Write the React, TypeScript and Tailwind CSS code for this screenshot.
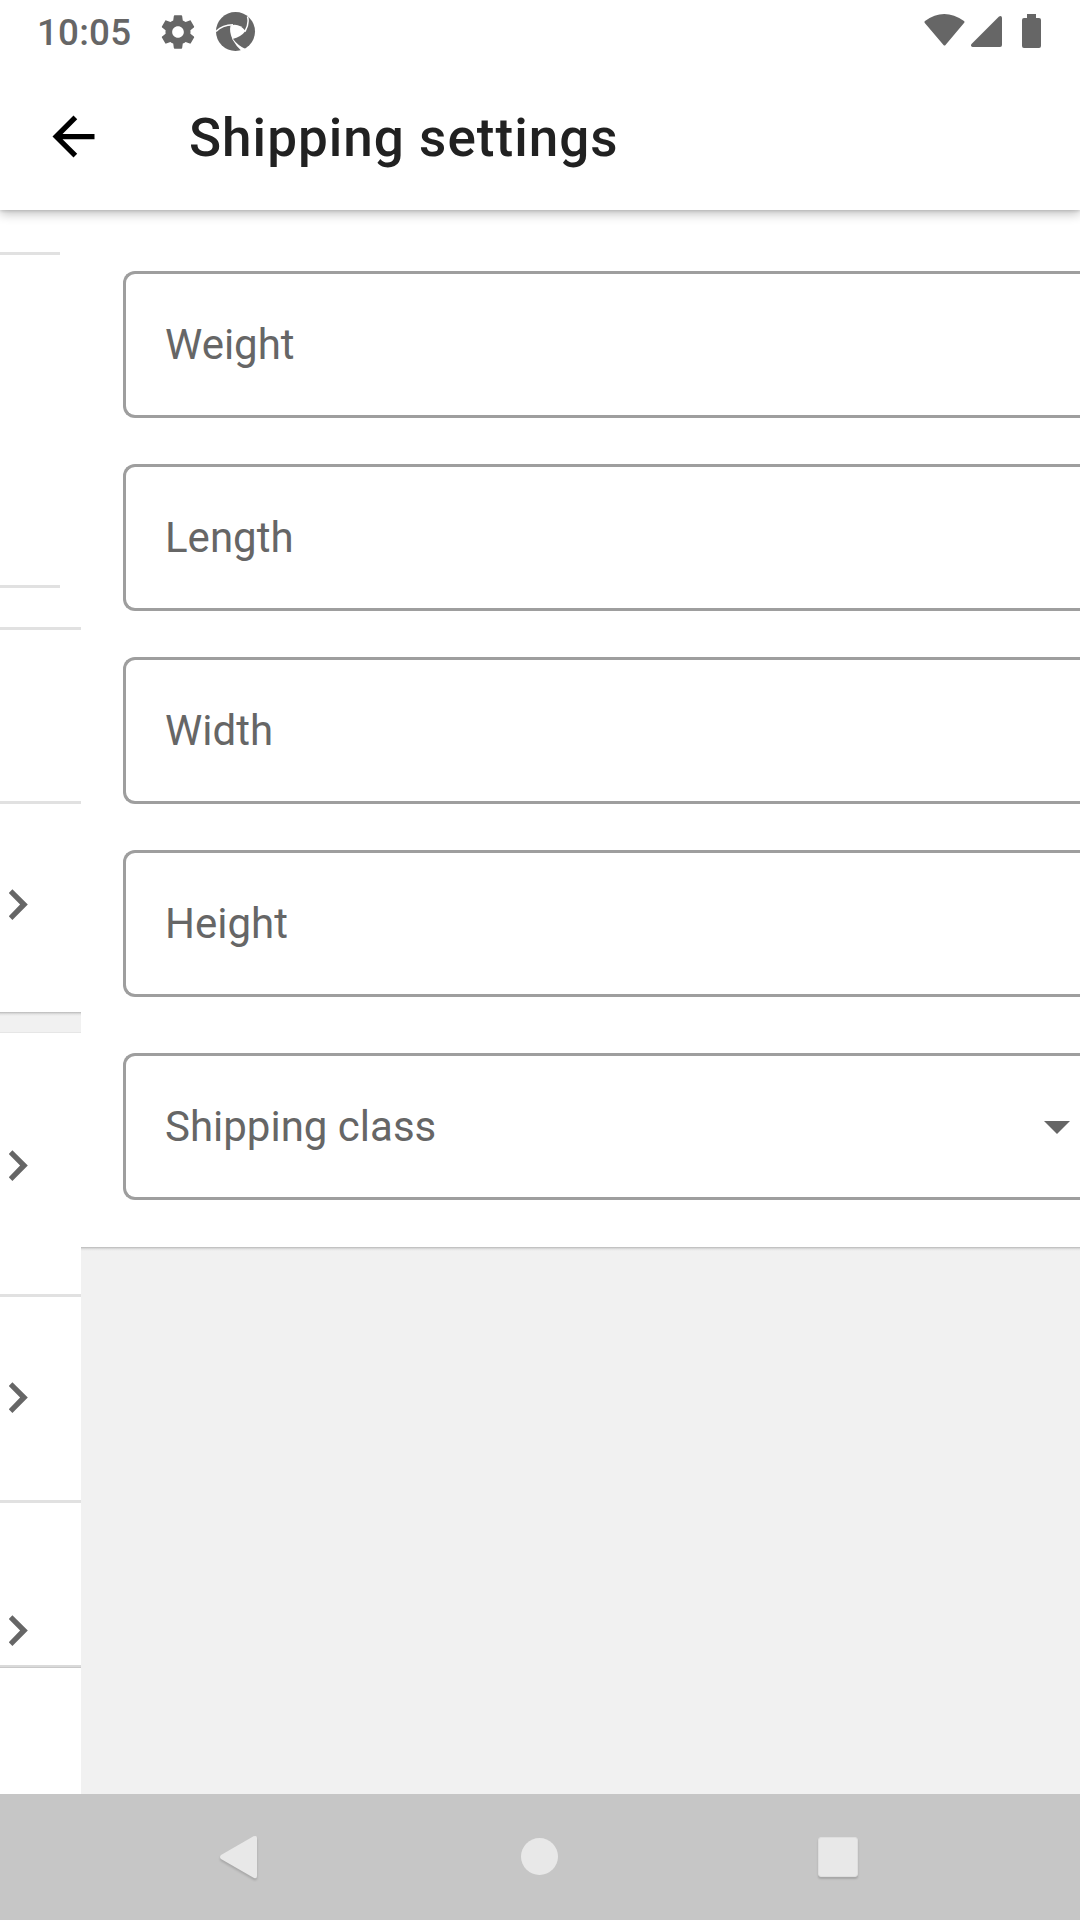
import React from "react";

const FIELDS = ["Weight", "Length", "Width", "Height"];

function Chevron() {
  return (
    <svg viewBox="0 0 19 32" className="ml-[9px] h-8 w-[19px] shrink-0 text-[#666]">
      <path d="M-.3 4L3.400 .3L18.800 15.600L3.400 31L-.3 27.300L11.100 15.600Z" fill="currentColor" />
    </svg>
  );
}

function StatusBar() {
  return (
    <div className="flex h-[63px] shrink-0 items-start text-[#666]">
      <span className="ml-[37px] mt-[11px] w-[95px] whitespace-nowrap text-[36.75px] font-medium leading-[44px] tracking-[0.2px]">10:05</span>
      <svg viewBox="0 0 24 24" className="ml-[26px] mt-[12px] h-[40px] w-[40px] shrink-0" fill="currentColor">
        <path d="M19.430 12.980c.04-.32.07-.64.07-.98s-.03-.66-.07-.98l2.110-1.650c.19-.15.24-.42.12-.64l-2-3.460c-.12-.22-.39-.3-.61-.22l-2.490 1c-.52-.4-1.080-.73-1.690-.98l-.38-2.650C14.460 2.180 14.250 2 14 2h-4c-.25 0-.46.18-.49.42l-.38 2.650c-.61.25-1.170.59-1.690.98l-2.490-1c-.23-.09-.49 0-.61.22l-2 3.460c-.13.22-.07.49.12.64l2.110 1.650c-.04.32-.07.65-.07.98s.03.66.07.98l-2.110 1.650c-.19.15-.24.42-.12.64l2 3.460c.12.22.39.3.61.22l2.490-1c.52.4 1.080.73 1.690.98l.38 2.650c.03.24.24.42.49.42h4c.25 0 .46-.18.49-.42l.38-2.650c.61-.25 1.170-.59 1.690-.98l2.490 1c.23.09.49 0 .61-.22l2-3.460c.12-.22.07-.49-.12-.64l-2.110-1.650zM12 15.500c-1.930 0-3.500-1.570-3.500-3.500s1.570-3.500 3.500-3.500 3.500 1.570 3.500 3.500-1.570 3.500-3.500 3.500z" />
      </svg>
      <svg viewBox="0 0 40 40" className="ml-[18px] mt-[12px] h-10 w-10 shrink-0">
        <circle cx="19.500" cy="19.500" r="19.500" fill="currentColor" />
        <path d="M14.500 13.500Q23 10.500 29.500 19Q25 25 16.500 27Q13 20 14.500 13.500Z" fill="#fff" />
        <path d="M0 19.500Q6 13 17 12.800M31.500 4.500Q33.500 12 29 19.500" fill="none" stroke="#fff" strokeWidth="1.500" />
        <path d="M15.800 26.500Q20 34 26 39.500L30.500 37.500Q22 34 16.300 26Z" fill="#fff" />
      </svg>
      <svg viewBox="0 0 118 35" className="ml-auto mr-[38px] mt-[14px] h-[35px] w-[118px] shrink-0" fill="currentColor">
        <path d="M1 7Q20-7 40 7Q41 8 40 9L21.500 31Q20.500 32 19.500 31L.8 9Q0 8 1 7Z" />
        <path d="M47.500 30L75 2.500Q77.500 1 78 3.500V31Q78 33 76 33H48.500Q46 32 47.500 30Z" />
        <path d="M103 0H112V4H115Q117 4 117 6V32Q117 34 115 34H100Q98 34 98 32V6Q98 4 100 4H103Z" />
      </svg>
    </div>
  );
}

function Toolbar() {
  return (
    <div className="flex h-[147px] shrink-0 items-center">
      <svg viewBox="0 0 24 24" className="ml-[42px] h-[63px] w-[63px] shrink-0">
        <path d="M20 11H7.830l5.590-5.590L12 4l-8 8 8 8 1.410-1.410L7.830 13H20z" />
      </svg>
      <h1 className="ml-[84px] mt-[3px] whitespace-nowrap text-[53px] font-medium leading-[62px] tracking-[1.03px] text-[#212121]">
        Shipping settings
      </h1>
    </div>
  );
}

function OutlinedField({ label, dropdown = false }: { label: string; dropdown?: boolean }) {
  return (
    <div className="flex h-[147px] shrink-0 items-center rounded-l-[12px] border-[3px] border-r-0 border-[#9e9e9e] pl-[39px] pr-[10.5px]">
      <span className="whitespace-nowrap text-[42px] leading-[50px] text-[#666]">{label}</span>
      {dropdown && (
        <svg viewBox="0 0 26 13" className="ml-auto mt-[2px] h-[13px] w-[26px]">
          <path d="M0 0H26L13 13Z" fill="#666" />
        </svg>
      )}
    </div>
  );
}

function PreviousScreen() {
  return (
    <div className="flex w-[81px] shrink-0 flex-col bg-white">
      <div className="mt-[42px] h-[336px] w-[60px] shrink-0 border-y-[3px] border-[#e1e1e1]" />
      <div className="mt-[39px] h-[177px] shrink-0 border-y-[3px] border-[#e1e1e1]" />
      <div className="flex h-[208px] shrink-0 items-start pt-[85px]">
        <Chevron />
      </div>
      <div className="h-[21px] shrink-0 border-b border-[#e6e6e6] bg-[linear-gradient(#b8b8b8,#e2e2e2_2px,#f1f1f1_4px)]" />
      <div className="flex h-[264px] shrink-0 items-start border-b-[3px] border-[#e1e1e1] pt-[117px]">
        <Chevron />
      </div>
      <div className="flex h-[206px] shrink-0 items-start border-b-[3px] border-[#e1e1e1] pt-[85px]">
        <Chevron />
      </div>
      <div className="flex h-[164px] shrink-0 items-start border-b-2 border-[#dadada] pt-[112px]">
        <Chevron />
      </div>
      <div className="h-px shrink-0 bg-[#c9c9c9]" />
    </div>
  );
}

function ShippingForm() {
  return (
    <div className="min-w-0 flex-1 bg-[#f1f1f1]">
      <div className="flex h-[1037px] flex-col bg-white pl-[42px] pt-[61px]">
        <div className="flex flex-col gap-[46px]">
          {FIELDS.map((label) => (
            <OutlinedField key={label} label={label} />
          ))}
        </div>
        <div className="mt-[56px]">
          <OutlinedField label="Shipping class" dropdown />
        </div>
      </div>
      <div className="h-1 bg-[linear-gradient(#b8b8b8,#e2e2e2_2px,#f1f1f1_4px)]" />
    </div>
  );
}

function NavigationBar() {
  return (
    <div className="flex h-[126px] shrink-0 items-start bg-[#c6c6c6] pt-[41px]">
      <svg viewBox="0 0 38 48" className="ml-[220px] h-12 w-[38px] shrink-0 drop-shadow-[0_2px_1px_rgba(0,0,0,0.16)]">
        <path d="M1 20L33.500 1.300Q37 0 37 3V41Q37 44 34 43L1 24Q-1 22 1 20Z" fill="#e8e8e8" />
      </svg>
      <div className="ml-[263px] mt-[3px] h-[37px] w-[37px] rounded-full bg-[#e8e8e8]" />
      <div className="ml-[260px] mt-[2px] h-10 w-10 rounded-[3px] border border-[#dedede] bg-[#e8e8e8] shadow-[0_2px_2px_rgba(0,0,0,0.16)]" />
    </div>
  );
}

export default function App() {
  return (
    <div className="flex h-[1920px] w-[1080px] flex-col overflow-hidden bg-white font-[Roboto,sans-serif]">
      <header className="relative z-10 flex h-[210px] shrink-0 flex-col bg-white shadow-[0_4px_10px_rgba(0,0,0,0.24),0_1px_3px_rgba(0,0,0,0.14)]">
        <StatusBar />
        <Toolbar />
      </header>
      <main className="flex h-[1584px] shrink-0">
        <PreviousScreen />
        <ShippingForm />
      </main>
      <NavigationBar />
    </div>
  );
}
